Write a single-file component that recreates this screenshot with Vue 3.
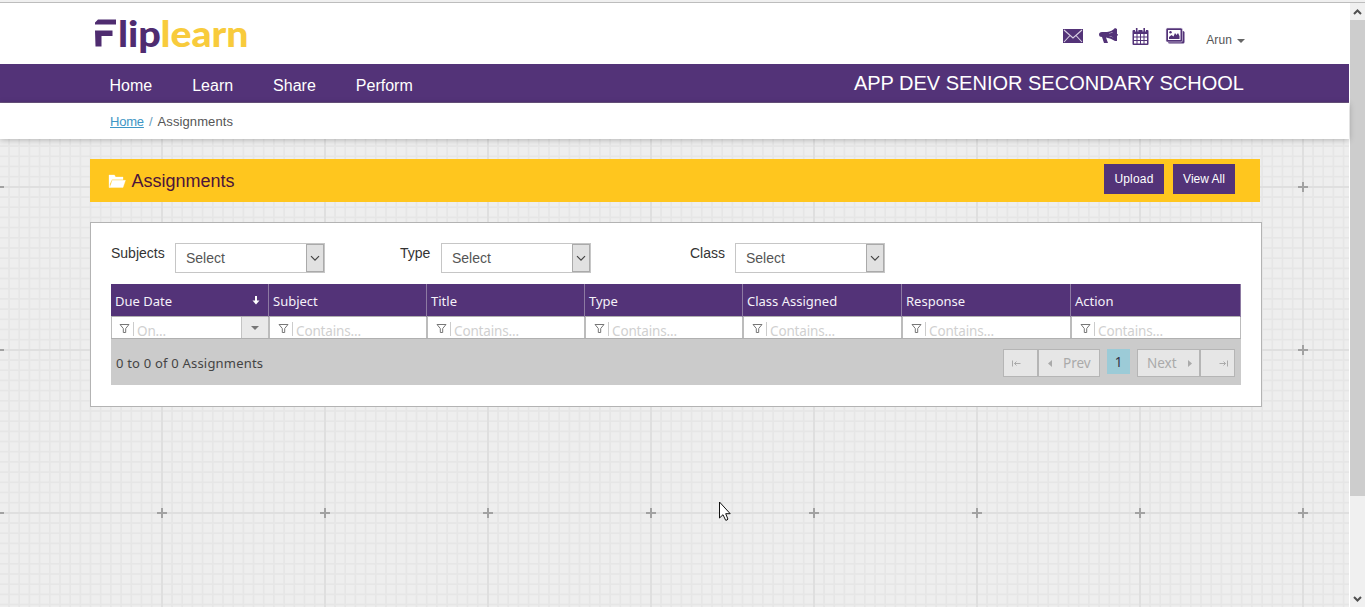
<script setup>
const nav = ['Home', 'Learn', 'Share', 'Perform']
const filters = [
  { label: 'Subjects', cls: 'f-subjects' },
  { label: 'Type', cls: 'f-type' },
  { label: 'Class', cls: 'f-class' }
]
const columns = ['Due Date', 'Subject', 'Title', 'Type', 'Class Assigned', 'Response', 'Action']
const minor = Array.from({ length: 15 }, (_, i) => ((i + 1) * 163) / 16)
</script>

<template>
  <div class="window">
    <div class="strip"></div>
    <div class="view">
      <div class="page">
        <svg class="grid" width="1349" height="604">
          <defs>
            <pattern id="tile" x="-2" y="20" width="163" height="163" patternUnits="userSpaceOnUse">
              <g fill="#e6e6e6">
                <rect v-for="m in minor" :key="'v' + m" :x="m" y="0" width="1.7" height="163" />
                <rect v-for="m in minor" :key="'h' + m" x="0" :y="m" width="163" height="1.7" />
              </g>
              <path d="M0 0H2V163H0zM0 0H163V2H0z" fill="#dfdfdf" />
            </pattern>
            <pattern id="plus" x="-10" y="12" width="163" height="163" patternUnits="userSpaceOnUse">
              <path d="M4 8H14V10H4zM8 4H10V14H8z" fill="#a2a2a2" />
            </pattern>
          </defs>
          <rect width="1349" height="604" fill="#eee" />
          <rect width="1349" height="604" fill="url(#tile)" />
          <rect width="1349" height="604" fill="url(#plus)" />
        </svg>

        <header class="top">
          <svg class="logo" width="160" height="46" viewBox="0 0 160 46">
            <path d="M6 1.500H24V6.500H3V4.500zM3 12.500H20.500V18H9.500V28.500H3.500z" fill="#4f2c70" />
            <text x="26" y="28.500" textLength="43" lengthAdjust="spacingAndGlyphs" fill="#4f2c70">lip</text>
            <text x="68.500" y="28.500" textLength="88" lengthAdjust="spacingAndGlyphs" fill="#f8cb3c">learn</text>
          </svg>
          <div class="tools">
            <svg width="130" height="22" viewBox="0 0 130 22">
              <rect x="3" y="4" width="20" height="14" fill="#533378" />
              <path d="M4 5L13 13L22 5M4 17L10 10.500M22 17L16 10.500" fill="none" stroke="#d9d0e2" stroke-width="1.100" />
              <path d="M55 3L57 4V9Q59 9.500 57 11V16L55 16Q51 13 46 12.500L48 18H44L42 12Q39 12 39 9.500Q39 7 42 7H47Q52 6.500 55 3zM53.500 7L49 8.300V11L53.500 12.500z" fill="#533378" fill-rule="evenodd" />
              <path d="M55.200 5.500V14Q52 11 48.500 10.800V8.500Q52 8.500 55.200 5.500z" fill="#533378" />
              <rect x="72.500" y="5" width="16" height="15" rx="1" fill="#533378" />
              <g fill="#fff">
                <rect v-for="n in 12" :key="n" :x="74 + ((n - 1) % 4) * 3.500" :y="9 + Math.floor((n - 1) / 4) * 3.500" width="2.500" height="2.500" />
                <rect x="75" y="4" width="3.400" height="2.500" /><rect x="82.500" y="4" width="3.400" height="2.500" />
              </g>
              <path d="M76.700 3V7M84.200 3V7" stroke="#533378" stroke-width="1.600" />
              <rect x="108" y="6" width="16.500" height="12.500" rx="1.500" fill="#533378" />
              <rect x="106" y="3" width="16.500" height="14" rx="1.500" fill="#533378" stroke="#e8e2ee" stroke-width=".6" />
              <rect x="108" y="5" width="12.500" height="10" fill="#fff" />
              <path d="M109 14V12L111.500 10L113.500 11.500L115 8L116.500 10L118 8L119.500 11V14z" fill="#533378" />
              <circle cx="110.500" cy="7.300" r="1.200" fill="#533378" />
            </svg>
            <span class="user">Arun</span><i class="caret"></i>
          </div>
        </header>

        <nav class="nav">
          <a v-for="n in nav" :key="n">{{ n }}</a>
          <span class="school">APP DEV SENIOR SECONDARY SCHOOL</span>
        </nav>

        <div class="crumbs"><a>Home</a><em>/</em><span>Assignments</span></div>

        <section class="title">
          <svg width="18" height="15" viewBox="0 0 18 15">
            <path d="M1 1H6.500L7.500 3H15V5.500H4L1.800 10V13.500H1zM4.300 6.300H17.500L15 13.500H1.800z" fill="#fff" stroke="#fff" stroke-width=".3" />
          </svg>
          <h1>Assignments</h1>
          <button>Upload</button>
          <button class="all">View All</button>
        </section>

        <section class="panel">
          <div class="filters">
            <div v-for="f in filters" :key="f.label" class="filter" :class="f.cls">
              <label>{{ f.label }}</label>
              <div class="select">
                <span>Select</span>
                <b><svg width="10" height="7" viewBox="0 0 10 7"><path d="M1 1.200L5 5.200L9 1.200" fill="none" stroke="#444" stroke-width="1.200" /></svg></b>
              </div>
            </div>
          </div>

          <div class="table">
            <div class="row head">
              <div v-for="(c, i) in columns" :key="c" class="cell">
                <span>{{ c }}</span>
                <svg v-if="i === 0" width="8" height="9" viewBox="0 0 8 9"><path d="M3 0H5V4.500H7.500L4 8.500L.5 4.500H3z" fill="#fff" /></svg>
              </div>
            </div>
            <div class="row search">
              <div v-for="(c, i) in columns" :key="c" class="cell">
                <svg width="11" height="11" viewBox="0 0 11 11"><path d="M1 1.500H10L6.700 5.500V9.500H4.300V5.500z" fill="none" stroke="#777" /></svg>
                <u></u><span>{{ i === 0 ? 'On...' : 'Contains...' }}</span>
                <b v-if="i === 0"><i></i></b>
              </div>
            </div>
            <div class="foot">
              <span class="count">0 to 0 of 0 Assignments</span>
              <div class="pager">
                <div class="pg first"><svg width="9" height="7" viewBox="0 0 9 7"><path d="M.5 .5V6.500M8.500 3.500H2.500M4.500 1.500L2.500 3.500L4.500 5.500" fill="none" stroke="#aaa" /></svg></div>
                <div class="pg prev"><svg width="4" height="7" viewBox="0 0 4 7"><path d="M4 0V7L0 3.500z" fill="#aaa" /></svg><span>Prev</span></div>
                <div class="current">1</div>
                <div class="pg next"><span>Next</span><svg width="4" height="7" viewBox="0 0 4 7"><path d="M0 0V7L4 3.500z" fill="#aaa" /></svg></div>
                <div class="pg last"><svg width="9" height="7" viewBox="0 0 9 7"><path d="M8.500 .5V6.500M.5 3.500H6.500M4.500 1.500L6.500 3.500L4.500 5.500" fill="none" stroke="#aaa" /></svg></div>
              </div>
            </div>
          </div>
        </section>
      </div>

      <aside class="scroll">
        <svg width="15" height="17" viewBox="0 0 15 17"><path d="M4 11L7.500 7.500L11 11" fill="none" stroke="#505050" stroke-width="2" /></svg>
        <div class="thumb"></div>
        <svg width="15" height="17" viewBox="0 0 15 17"><path d="M4 7L7.500 10.500L11 7" fill="none" stroke="#505050" stroke-width="2" /></svg>
      </aside>
    </div>
    <svg class="pointer" width="13" height="21" viewBox="0 0 13 21"><path d="M1.500 1V17L5 13.700L7.600 19.200Q9.500 19.500 9.900 18L7.700 12.700H12.200z" fill="#fff" stroke="#111" /></svg>
  </div>
</template>

<style>
body { margin: 0; overflow: hidden; }
</style>
<style scoped>
* { box-sizing: border-box; }
.window { position: relative; width: 1365px; height: 607px; overflow: hidden; background: #fff; font-family: "Liberation Sans", Arial, sans-serif; white-space: nowrap; }
.window svg { display: block; flex: none; }
.strip { height: 3px; background: #f0f0f0; border-bottom: 1px solid #bdbdbd; }
.view { display: flex; height: 604px; }
.page { position: relative; width: 1349px; height: 604px; margin-right: 1px; }
.page > * { position: relative; }
.page > .grid { position: absolute; left: 0; top: 0; }
.top { height: 61px; background: #fff; display: flex; justify-content: space-between; padding: 15px 104px 0 92px; }
.window .logo { overflow: visible; }
.logo text { font: 900 36px Lato, sans-serif; }
.tools { display: flex; padding-top: 7px; }
.tools > svg { margin-right: -1px; }
.user { font-size: 12px; letter-spacing: .1px; color: #555; margin: 8px 0 0 17px; }
.caret { border: 4px solid transparent; border-top-color: #666; border-bottom: 0; height: 4px; margin: 14px 0 0 5px; }
.nav { height: 39px; background: #533378; border-bottom: 1px solid #6b5480; display: flex; padding-left: 109.5px; gap: 40px; color: #fff; font-size: 16px; line-height: 43px; }
.school { margin-left: auto; margin-right: 105px; font-size: 20px; line-height: 38px; }
.crumbs { height: 36px; background: #fff; box-shadow: 0 1px 6px rgba(0, 0, 0, .25); padding-left: 110px; font-size: 13px; line-height: 37px; color: #555; display: flex; }
.crumbs a { color: #3e96c5; text-decoration: underline; letter-spacing: -.2px; }
.crumbs em { font-style: normal; color: #6a9dbb; margin: 0 5px; }
.crumbs span { letter-spacing: .1px; }
.title { margin: 20px 0 0 90px; width: 1170px; height: 43px; background: #ffc61e; display: flex; padding-left: 18px; }
.title svg { margin-top: 15px; }
.title h1 { margin: 0 auto 0 5.5px; font-size: 18px; font-weight: 400; line-height: 44px; color: #4c143a; }
.title button { width: 60px; height: 30px; margin: 5px 9px 0 0; padding: 0; border: 0; background: #533378; color: #fff; font: 12px "Liberation Sans", Arial, sans-serif; letter-spacing: .2px; }
.title .all { width: 62px; margin-right: 25px; letter-spacing: 0; }
.panel { margin: 20px 0 0 90px; width: 1172px; height: 185px; border: 1px solid #b3b3b3; background: #fff; padding: 20px; }
.filters { display: flex; height: 30px; }
.filter { display: flex; justify-content: space-between; font-size: 14px; color: #333; }
.filter label { line-height: 21px; }
.f-subjects { width: 214px; }
.f-type { width: 191px; margin-left: 75px; }
.f-class { width: 195px; margin-left: 99px; }
.select { width: 150px; height: 30px; border: 1px solid #c6c6c6; display: flex; justify-content: space-between; line-height: 29px; padding-left: 10px; color: #555; font-size: 14px; }
.select b { width: 18px; border: 1px solid #aaa; background: #e1e1e1; display: flex; align-items: center; justify-content: center; }
.table { margin-top: 11px; width: 1130px; font-family: "Noto Sans", "Open Sans", sans-serif; font-size: 13px; }
.row { display: grid; grid-template-columns: 158px 158px 158px 158px 159px 169px 170px; }
.head { height: 32px; background: #533378; color: #f5f1f8; line-height: 34px; }
.head .cell { display: flex; justify-content: space-between; padding: 0 8px 0 4px; border-right: 1px solid #8d7aa2; }
.head .cell svg { margin-top: 12px; }
.search { height: 23px; background: #fff; border-bottom: 1px solid #b0b0b0; border-top: 1px solid #b0b0b0; }
.search .cell { display: flex; height: 21px; padding-left: 8px; box-shadow: 1px 0 #bcbcbc; border-right: 1px solid #bcbcbc; }
.search .cell:first-child { border-left: 1px solid #bcbcbc; padding-left: 6px; }
.search .cell:last-child { box-shadow: none; }
.search .cell svg { margin: 6px 3px 0 1px; }
.search u { width: 1px; height: 14px; margin-top: 5px; background: #ccc; }
.search .cell span { margin-top: 4px; padding-left: 3px; color: #d0d0d0; font-size: 13.5px; line-height: 20px; height: 17px; letter-spacing: -.15px; }
.search b { margin-left: auto; width: 27px; background: #e9e9e9; border-left: 1px solid #c4c4c4; }
.search b i { display: block; margin: 9px 0 0 9px; width: 8px; border: 4px solid transparent; border-top-color: #777; border-bottom: 0; }
.foot { height: 46px; background: #cbcbcb; display: flex; justify-content: space-between; padding: 0 6px 0 5px; color: #444; line-height: 49px; }
.count { letter-spacing: .2px; }
.pager { display: flex; margin-top: 10px; font-size: 13.5px; line-height: 26px; }
.pg { height: 28px; border: 1px solid #b5b5b5; background: #e6e6e6; color: #aaa; display: flex; align-items: center; }
.first { width: 35px; padding-left: 8px; }
.prev { width: 62px; padding-left: 9px; gap: 11px; }
.current { width: 23px; height: 25px; margin: 0 7px; background: #9ccbd7; color: #334; text-align: center; }
.next { width: 63px; padding-left: 9px; gap: 11px; }
.last { width: 35px; padding-left: 18px; }
.scroll { width: 15px; background: #f0f0f0; display: flex; flex-direction: column; }
.thumb { height: 476px; margin-bottom: 94px; background: #cdcdcd; }
.pointer { position: absolute; left: 718px; top: 501px; }
</style>
